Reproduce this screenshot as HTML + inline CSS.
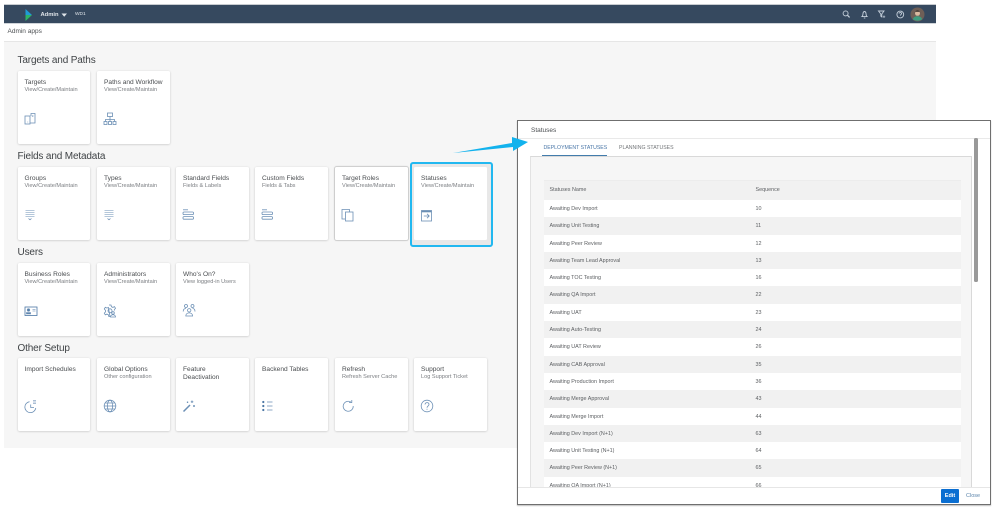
<!DOCTYPE html>
<html><head><meta charset="utf-8"><style>
html,body{margin:0;padding:0;background:#fff}
body{width:1000px;height:514px;position:relative;overflow:hidden;font-family:"Liberation Sans",sans-serif;color:#32363a}
#w{position:absolute;left:0;top:0;width:1000px;height:514px;overflow:hidden;filter:blur(.35px)}
.a{position:absolute}
.h{position:absolute;left:17.500px;font-size:10px;letter-spacing:-.15px;line-height:12px;color:#3f4346;white-space:nowrap}
.c{position:absolute;width:72.500px;height:73px;background:#fff;border-radius:1.500px;box-shadow:0 .5px 2px rgba(0,0,0,.2)}
.c b{position:absolute;left:7px;top:8px;font-weight:normal;font-size:6.600px;line-height:8px;color:#4a4d50;white-space:nowrap}
.c i{position:absolute;left:7px;top:15.500px;font-style:normal;font-size:5.600px;line-height:7px;color:#7b7e82;white-space:nowrap}
.c svg{position:absolute;left:6px;top:41px;width:14px;height:14px;fill:none;stroke:#6b8fb5;stroke-width:.8}
.r{height:17.300px;line-height:18.300px;font-size:5.400px;color:#5c5f62;position:relative;padding-left:6px;white-space:nowrap}
.r span{position:absolute;left:212px}
.r:nth-child(even){background:#f1f1f1}.r:nth-child(odd){background:#fff}
</style></head><body><div id="w">
<div class="a" style="left:4px;top:4px;width:932px;height:1px;background:#c8ccd0"></div>
<div class="a" style="left:4px;top:5px;width:932px;height:18px;background:#36495f"></div>
<div class="a" style="left:4px;top:23px;width:932px;height:1px;background:#cfd4d9"></div>
<svg class="a" style="left:24px;top:7.500px" width="10" height="14"><path d="M1.500 1 L8 7 L1.500 7Z" fill="#1f9ad6"/><path d="M1.500 7 L8 7 L1.500 13Z" fill="#2db567"/></svg>
<div class="a" style="left:40.500px;top:10.500px;font-size:5.800px;line-height:8px;font-weight:bold;color:#dfe4e9">Admin</div>
<svg class="a" style="left:61px;top:12.500px" width="7" height="5"><path d="M.5.5H6L3.200 3.800Z" fill="#dfe4e9"/></svg>
<div class="a" style="left:75px;top:11px;font-size:4.800px;line-height:8px;color:#dfe4e9">WD1</div>
<svg class="a" style="left:840px;top:8px" width="70" height="13" fill="none" stroke="#c5d0db" stroke-width=".9">
<circle cx="5.600" cy="5.400" r="2.500"/><path d="M7.400 7.200L9.600 9.400" stroke-width="1.200"/>
<path d="M22 8.600c1-.8 .8-2 1-3.200.2-1.300 1-1.900 1.500-1.900s1.300.6 1.500 1.900c.2 1.200 0 2.400 1 3.200Z"/><path d="M23.800 10h1.500"/>
<path d="M38.500 3h5.500l-2.200 3v3l-1-.8V6Z"/><path d="M44 7.500v2.500M42.800 8.800h2.400" stroke-width=".7"/>
<circle cx="60.300" cy="6.500" r="3.400"/><path d="M59 5.500c.2-1.300 2.600-1.300 2.600 0 0 .9-1.300 1-1.300 2.100"/>
</svg>
<svg class="a" style="left:910px;top:6.500px" width="15" height="15"><circle cx="7.500" cy="7.500" r="7" fill="#6f5f57"/><circle cx="7.500" cy="6.300" r="2.500" fill="#d9b9a0"/><path d="M4.800 6.300c0-3.800 5.400-3.800 5.400 0l-.5-1.500H5.300Z" fill="#2c2522"/><path d="M2.800 12.300c.8-2.300 2.800-3 4.700-3s3.900.7 4.700 3c-2.600 2-6.800 2-9.400 0Z" fill="#3f9c7f"/></svg>

<div class="a" style="left:4px;top:24px;width:932px;height:17px;background:#fff"></div>
<div class="a" style="left:7.500px;top:28px;font-size:6.500px;line-height:8px;color:#4d5053">Admin apps</div>
<div class="a" style="left:4px;top:41px;width:932px;height:1px;background:#e6e6e6"></div>
<div class="a" style="left:4px;top:42px;width:932px;height:406px;background:#f6f6f6"></div>

<div class="h" style="top:55px">Targets and Paths</div>
<div class="h" style="top:151px">Fields and Metadata</div>
<div class="h" style="top:246.500px">Users</div>
<div class="h" style="top:343px">Other Setup</div>

<div class="c" style="left:17.500px;top:71px"><b>Targets</b><i>View/Create/Maintain</i><svg viewBox="0 0 14 14"><rect x="1" y="4" width="5" height="8"/><path d="M6 11h5V1.500H7V4M3.500 10h.6M9 3.500l-1 1M9 3.500v1"/></svg></div>
<div class="c" style="left:97px;top:71px"><b>Paths and Workflow</b><i>View/Create/Maintain</i><svg viewBox="0 0 14 14"><rect x="4.500" y="1" width="5" height="3.500"/><path d="M7 4.500v3M2.500 9.500v-2h9v2M7 7.500v2"/><rect x="1" y="9.500" width="3" height="3"/><rect x="5.500" y="9.500" width="3" height="3"/><rect x="10" y="9.500" width="3" height="3"/></svg></div>

<div class="c" style="left:17.500px;top:167px"><b>Groups</b><i>View/Create/Maintain</i><svg viewBox="0 0 14 14"><path d="M1.500 2.500h9M1.500 4.500h9M1.500 6.500h9M1.500 8.500h9" stroke-width=".6"/><path d="M4.500 10.500l1.500 1.200 1.500-1.200"/></svg></div>
<div class="c" style="left:97px;top:167px"><b>Types</b><i>View/Create/Maintain</i><svg viewBox="0 0 14 14"><path d="M1.500 2.500h9M1.500 4.500h9M1.500 6.500h9M1.500 8.500h9" stroke-width=".6"/><path d="M4.500 10.500l1.500 1.200 1.500-1.200"/></svg></div>
<div class="c" style="left:176px;top:167px"><b>Standard Fields</b><i>Fields &amp; Labels</i><svg viewBox="0 0 14 14"><path d="M1 1.800h5"/><rect x="1" y="4" width="10.500" height="2.600" rx="1"/><rect x="1" y="8.600" width="10.500" height="2.600" rx="1"/></svg></div>
<div class="c" style="left:255px;top:167px"><b>Custom Fields</b><i>Fields &amp; Tabs</i><svg viewBox="0 0 14 14"><path d="M1 1.800h5"/><rect x="1" y="4" width="10.500" height="2.600" rx="1"/><rect x="1" y="8.600" width="10.500" height="2.600" rx="1"/></svg></div>
<div class="c" style="left:335px;top:167px;box-shadow:0 0 0 .8px #c9c9c9,0 0 2px rgba(0,0,0,.25)"><b>Target Roles</b><i>View/Create/Maintain</i><svg viewBox="0 0 14 14"><path d="M4 11H1V1.500h7.500V4"/><rect x="4.500" y="4" width="7.500" height="9"/></svg></div>
<div class="a" style="left:410px;top:162px;width:79px;height:81px;border:2px solid #22b8f0;border-radius:3px;background:#e8e8e8"></div>
<div class="c" style="left:414px;top:167px;box-shadow:none"><b>Statuses</b><i>View/Create/Maintain</i><svg viewBox="0 0 14 14"><rect x="1.500" y="2.500" width="10" height="10.500"/><path d="M1.500 3.500h10" stroke-width="1.600"/><path d="M3.800 8h5.400M7 5.800L9.200 8 7 10.200"/></svg></div>

<div class="c" style="left:17.500px;top:263px"><b>Business Roles</b><i>View/Create/Maintain</i><svg viewBox="0 0 14 14"><rect x="1" y="3" width="12" height="8.500" stroke="#4c77a5"/><circle cx="4.500" cy="6" r="1.200" fill="#4c77a5"/><path d="M2.500 9.800h4V8.600h-4Z" fill="#4c77a5"/><path d="M8.500 5.500h3M8.500 7h3" stroke="#8ea9c6"/></svg></div>
<div class="c" style="left:97px;top:263px"><b>Administrators</b><i>View/Create/Maintain</i><svg viewBox="0 0 14 14"><path d="M6 1h2l.4 1.700 1.500.7 1.600-.8 1 1.700-1.200 1.300v1M7 12.500H5.800l-.4-1.700-1.500-.7-1.600.8-1-1.700 1.200-1.300V6.400L1.300 5l1-1.700 1.600.8 1.500-.7Z"/><circle cx="7" cy="6.800" r="2"/><circle cx="10" cy="9" r="1.300"/><path d="M7.500 13c0-3 5-3 5 0Z"/></svg></div>
<div class="c" style="left:176px;top:263px"><b>Who's On?</b><i>View logged-in Users</i><svg style="top:40px" viewBox="0 0 14 14"><circle cx="4" cy="3" r="1.500"/><circle cx="10.500" cy="3" r="1.500"/><circle cx="7.200" cy="7.300" r="1.700"/><path d="M1.200 8.500c0-2 1-3 2.800-3M13 8.500c0-2-1-3-2.500-3M3.800 13c0-4.200 6.800-4.200 6.800 0Z"/></svg></div>

<div class="c" style="left:17.500px;top:358px"><b>Import Schedules</b><svg viewBox="0 0 14 14"><path d="M5.500 2.700a5.500 5.500 0 1 0 6.300 6.300M6.700 5.500v3h3.300"/><path d="M9 1.500h3M9 3h3M9 4.500h3" stroke="#8ea9c6"/></svg></div>
<div class="c" style="left:97px;top:358px"><b>Global Options</b><i>Other configuration</i><svg viewBox="0 0 14 14"><circle cx="7" cy="7" r="5.800"/><ellipse cx="7" cy="7" rx="2.600" ry="5.800"/><path d="M1.200 7h11.600M2 4h10M2 10h10"/></svg></div>
<div class="c" style="left:176px;top:358px"><b>Feature<br>Deactivation</b><svg viewBox="0 0 14 14"><path d="M1.500 12.500L8 6" stroke-width="1.500"/><path d="M10 1.500v2.500M8.800 2.800h2.500M12 6v2M11 7h2M5.500 2.500v1.500M4.800 3.200h1.500" stroke-width=".9"/></svg></div>
<div class="c" style="left:255px;top:358px"><b>Backend Tables</b><svg viewBox="0 0 14 14"><circle cx="2.300" cy="3" r="1.100" fill="#4c77a5" stroke="none"/><circle cx="2.300" cy="7" r="1.100" fill="#4c77a5" stroke="none"/><circle cx="2.300" cy="11" r="1.100" fill="#4c77a5" stroke="none"/><path d="M6 3h5.500M6 7h5.500M6 11h5.500"/></svg></div>
<div class="c" style="left:335px;top:358px"><b>Refresh</b><i>Refresh Server Cache</i><svg viewBox="0 0 14 14"><path d="M10.500 3.500a5 5 0 1 0 1.700 3.500"/><path d="M8 3.500h2.800V1" stroke-width=".8"/></svg></div>
<div class="c" style="left:414px;top:358px"><b>Support</b><i>Log Support Ticket</i><svg viewBox="0 0 14 14"><circle cx="7" cy="7" r="5.800"/><path d="M5 5.500c.3-2.500 4-2.500 4 0 0 1.500-2 1.600-2 3.200M7 9.800v1"/></svg></div>

<div class="a" style="left:517px;top:120px;width:471.500px;height:383px;background:#fff;border:1px solid #6f6f6f;box-shadow:0 1px 1px rgba(0,0,0,.25);overflow:hidden">
 <div class="a" style="left:13px;top:6px;font-size:6.500px;line-height:8px;color:#4d5053">Statuses</div>
 <div class="a" style="left:0;top:17px;width:100%;height:1px;background:#e9e9e9"></div>
 <div class="a" style="left:25.500px;top:23.500px;font-size:5.200px;line-height:7px;color:#4a77a8">DEPLOYMENT STATUSES</div>
 <div class="a" style="left:24px;top:34px;width:65px;height:1px;background:#427cac"></div>
 <div class="a" style="left:101px;top:23.500px;font-size:5.200px;line-height:7px;color:#74777a">PLANNING STATUSES</div>
 <div class="a" style="left:12px;top:35px;width:440px;height:331px;background:#f6f6f6;border-top:1.500px solid #d9d9d9;border-left:1px solid #e2e2e2;border-right:1px solid #d9d9d9"></div>
 <div class="a" style="left:455.500px;top:17px;width:4.500px;height:144px;background:#999;border-radius:1.500px"></div>
 <div class="a" style="left:25.500px;top:58.500px;width:417px;height:307.500px;overflow:hidden">
  <div style="height:20.500px;line-height:19px;background:#f1f1f1;font-size:5.400px;color:#5c5f62;position:relative;padding-left:6px;border-top:1px solid #ececec;box-sizing:border-box">Statuses Name<span style="position:absolute;left:212px">Sequence</span></div>
  <div>
  <div class="r">Awaiting Dev Import<span>10</span></div>
  <div class="r">Awaiting Unit Testing<span>11</span></div>
  <div class="r">Awaiting Peer Review<span>12</span></div>
  <div class="r">Awaiting Team Lead Approval<span>13</span></div>
  <div class="r">Awaiting TOC Testing<span>16</span></div>
  <div class="r">Awaiting QA Import<span>22</span></div>
  <div class="r">Awaiting UAT<span>23</span></div>
  <div class="r">Awaiting Auto-Testing<span>24</span></div>
  <div class="r">Awaiting UAT Review<span>26</span></div>
  <div class="r">Awaiting CAB Approval<span>35</span></div>
  <div class="r">Awaiting Production Import<span>36</span></div>
  <div class="r">Awaiting Merge Approval<span>43</span></div>
  <div class="r">Awaiting Merge Import<span>44</span></div>
  <div class="r">Awaiting Dev Import (N+1)<span>63</span></div>
  <div class="r">Awaiting Unit Testing (N+1)<span>64</span></div>
  <div class="r">Awaiting Peer Review (N+1)<span>65</span></div>
  <div class="r">Awaiting QA Import (N+1)<span>66</span></div>
  </div>
 </div>
 <div class="a" style="left:0;top:366px;width:100%;height:17px;background:#fff;border-top:1px solid #e6e6e6"></div>
 <div class="a" style="left:423px;top:368px;width:18px;height:14px;background:#0a6ed1;border-radius:1px;color:#fff;font-size:5.500px;line-height:14px;text-align:center;font-weight:bold">Edit</div>
 <div class="a" style="left:448px;top:368px;font-size:5.500px;line-height:14px;color:#5b84ab">Close</div>
</div>
<svg class="a" style="left:450px;top:132px" width="82" height="24"><path d="M3 21 L62 11 L62 5 L78 10 L63 19 L63 15Z" fill="#12b2ed"/></svg>
</div></body></html>
